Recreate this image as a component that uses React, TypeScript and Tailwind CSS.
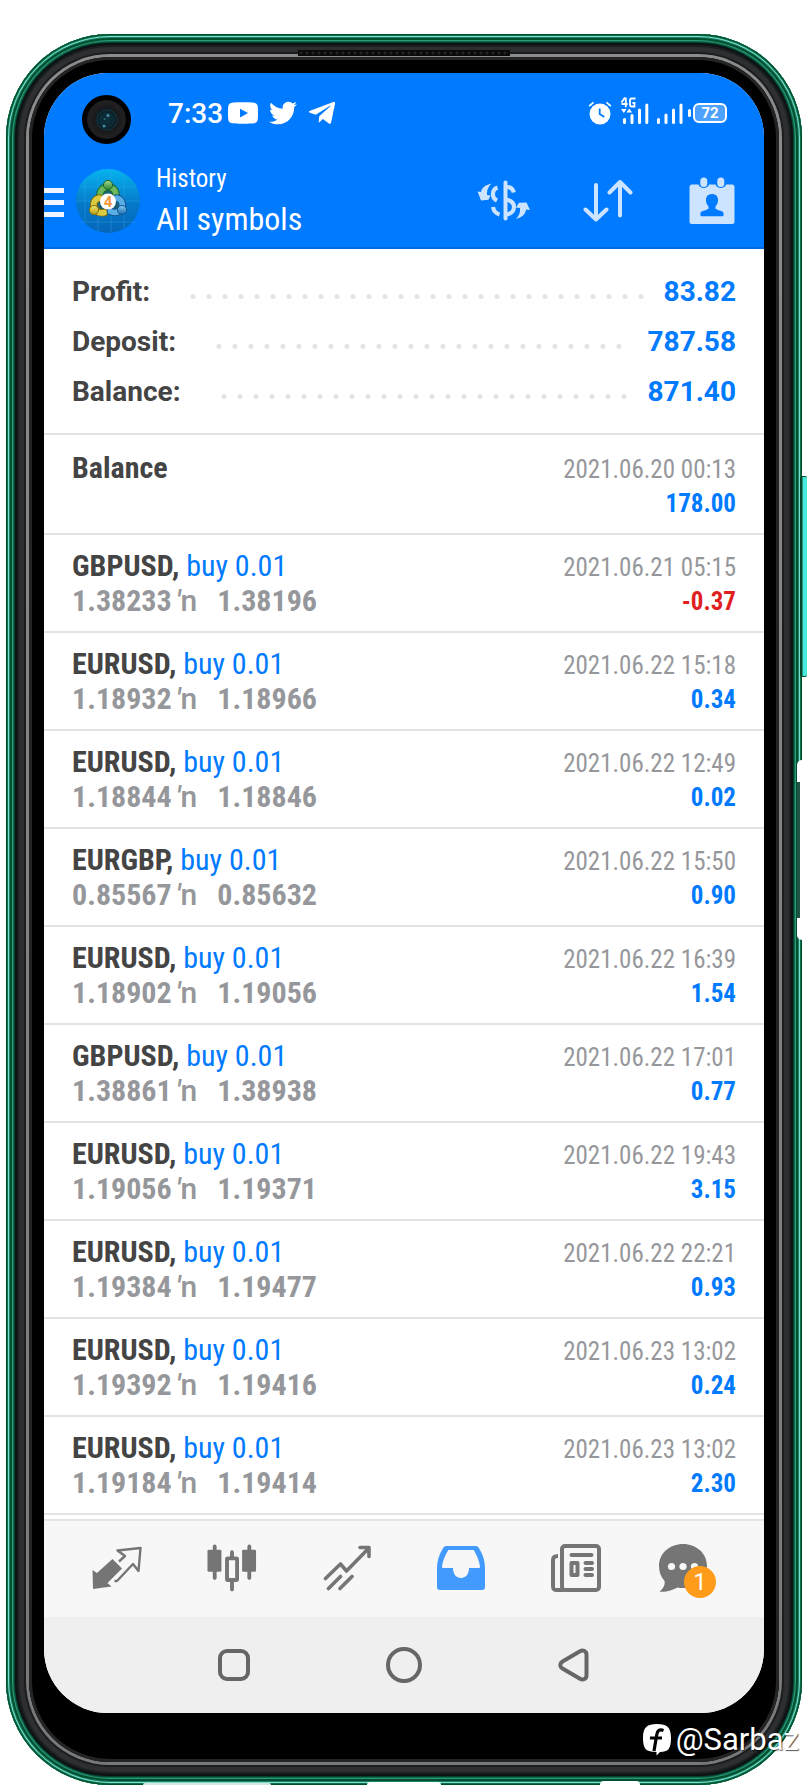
import type { ReactNode } from "react";
import { FaTelegramPlane, FaTwitter } from "react-icons/fa";

type Deal = {
  symbol: string;
  open: string;
  close: string;
  time: string;
  profit: string;
};

const condensed = "font-['Roboto_Condensed','Liberation_Sans_Narrow',Roboto,sans-serif]";

const summary = [
  { label: "Profit", value: "83.82", dots: "ml-10 mr-4" },
  { label: "Deposit", value: "787.58", dots: "ml-10 mr-5" },
  { label: "Balance", value: "871.40", dots: "ml-10 mr-4" },
];

const deals: Deal[] = [
  { symbol: "GBPUSD", open: "1.38233", close: "1.38196", time: "2021.06.21 05:15", profit: "-0.37" },
  { symbol: "EURUSD", open: "1.18932", close: "1.18966", time: "2021.06.22 15:18", profit: "0.34" },
  { symbol: "EURUSD", open: "1.18844", close: "1.18846", time: "2021.06.22 12:49", profit: "0.02" },
  { symbol: "EURGBP", open: "0.85567", close: "0.85632", time: "2021.06.22 15:50", profit: "0.90" },
  { symbol: "EURUSD", open: "1.18902", close: "1.19056", time: "2021.06.22 16:39", profit: "1.54" },
  { symbol: "GBPUSD", open: "1.38861", close: "1.38938", time: "2021.06.22 17:01", profit: "0.77" },
  { symbol: "EURUSD", open: "1.19056", close: "1.19371", time: "2021.06.22 19:43", profit: "3.15" },
  { symbol: "EURUSD", open: "1.19384", close: "1.19477", time: "2021.06.22 22:21", profit: "0.93" },
  { symbol: "EURUSD", open: "1.19392", close: "1.19416", time: "2021.06.23 13:02", profit: "0.24" },
  { symbol: "EURUSD", open: "1.19184", close: "1.19414", time: "2021.06.23 13:02", profit: "2.30" },
];

function YoutubeIcon() {
  return (
    <svg width="30" height="22" viewBox="0 0 30 22" aria-hidden="true">
      <path
        fill="#fff"
        fillRule="evenodd"
        d="M4 .8C8 .2 22 .2 26 .8c2.400.3 3.600 1.700 3.800 4 .3 4 .3 8.400 0 12.400-.2 2.300-1.400 3.700-3.800 4-4 .6-18 .6-22 0-2.400-.3-3.600-1.700-3.800-4-.3-4-.3-8.400 0-12.400C.4 2.500 1.600 1.100 4 .8ZM12 6.700v8.800l8-4.400Z"
      />
    </svg>
  );
}

function AlarmIcon() {
  return (
    <svg width="24" height="24" viewBox="0 0 24 24" fill="none" aria-hidden="true">
      <circle cx="12" cy="13" r="10.500" fill="#fff" />
      <path d="M1.200 5.200 5.500 1.400M22.800 5.200 18.500 1.400" stroke="#fff" strokeWidth="1.800" />
      <path d="M11.700 7.500v5.600l4.600 3" stroke="#007aff" strokeWidth="1.800" />
    </svg>
  );
}

function SignalIcon() {
  return (
    <svg width="64" height="28" viewBox="0 0 64 28" fill="#fff" role="img" aria-label="4G signal">
      <path d="M1.500 5.500 5 .5M1.500 7h6.200M5.800 .5v9.800M15.500 1.500h-4a1.500 1.500 0 0 0-1.500 1.500v5a1.500 1.500 0 0 0 1.500 1.500h3V6H12.500" fill="none" stroke="#fff" strokeWidth="1.800" />
      <path d="M1 12h5.500l-2.700 4ZM6.500 15.500 9.300 11.500l2.800 4Z" />
      <rect x="3" y="21" width="3" height="6" rx="1.500" />
      <rect x="10.500" y="17" width="3" height="10" rx="1.500" />
      <rect x="18" y="11.500" width="3" height="15.500" rx="1.500" />
      <rect x="25.300" y="6.500" width="3" height="20.500" rx="1.500" />
      <rect x="37" y="21" width="3" height="6" rx="1.500" />
      <rect x="44.500" y="16.500" width="3" height="10.500" rx="1.500" />
      <rect x="52" y="11.500" width="3" height="15.500" rx="1.500" />
      <rect x="59.500" y="6.500" width="3" height="20.500" rx="1.500" />
    </svg>
  );
}

function LogoIcon() {
  return (
    <svg width="64" height="64" viewBox="0 0 64 64" className="ml-3 shrink-0" aria-hidden="true">
      <defs>
        <linearGradient id="sky" x1="0" y1="0" x2="0" y2="1">
          <stop offset="0" stopColor="#06b4ef" />
          <stop offset=".55" stopColor="#0678c8" />
          <stop offset="1" stopColor="#0566b8" />
        </linearGradient>
        <linearGradient id="leaf" x1="0" y1="0" x2="0" y2="1">
          <stop offset="0" stopColor="#a8d888" />
          <stop offset="1" stopColor="#2b8a35" />
        </linearGradient>
        <linearGradient id="gold" x1="0" y1="0" x2="0" y2="1">
          <stop offset="0" stopColor="#f2e66a" />
          <stop offset="1" stopColor="#b89c14" />
        </linearGradient>
        <linearGradient id="sea" x1="0" y1="0" x2="0" y2="1">
          <stop offset="0" stopColor="#8fcdf4" />
          <stop offset="1" stopColor="#1467ad" />
        </linearGradient>
      </defs>
      <circle cx="32" cy="32" r="32" fill="url(#sky)" />
      <path d="M9 11v42M22 2v60M35 1v62M48 5v54M4 18h56M0 32h64M5 53h54" stroke="#3db0e8" strokeOpacity=".35" />
      <path d="M32 21 43 39H21Z" fill="none" stroke="#2a4a2a" strokeWidth="13.500" strokeLinejoin="round" strokeOpacity=".55" />
      <g fill="none" strokeLinecap="round">
        <path d="M24 28c-.5-6 2.500-10 8-10s8.500 4 8 10" stroke="#17682a" strokeWidth="7.500" />
        <path d="M24 28c-.5-6 2.500-10 8-10s8.500 4 8 10" stroke="#6db75f" strokeWidth="5.500" />
        <path d="M23.500 29c-5 1-7 5.500-5 10s6 5.500 10 4.500" stroke="#80700e" strokeWidth="7.500" />
        <path d="M23.500 29c-5 1-7 5.500-5 10s6 5.500 10 4.500" stroke="#dcca42" strokeWidth="5.500" />
        <path d="M40.500 29c5 1 7 5.500 5 10s-6 5.500-11 3.500" stroke="#125796" strokeWidth="7.500" />
        <path d="M40.500 29c5 1 7 5.500 5 10s-6 5.500-11 3.500" stroke="#59aee6" strokeWidth="5.500" />
      </g>
      <circle cx="32" cy="16" r="4.600" fill="url(#leaf)" stroke="#17682a" />
      <circle cx="18" cy="41" r="4.600" fill="url(#gold)" stroke="#80700e" />
      <circle cx="46" cy="41" r="4.600" fill="url(#sea)" stroke="#125796" />
      <circle cx="32" cy="32.500" r="8" fill="#fff" />
      <text x="32" y="38" textAnchor="middle" fontFamily="Roboto, sans-serif" fontSize="15" fontWeight="700" fill="#f39a3d">
        4
      </text>
    </svg>
  );
}

function CurrencyIcon() {
  return (
    <svg width="54" height="42" viewBox="0 0 54 42" fill="none" stroke="#cce4ff" aria-hidden="true">
      <path d="M28.500 2.500v36" strokeWidth="4" strokeLinecap="round" />
      <path d="M20.500 7.500c-5.500 2-6.500 10-.5 13" strokeWidth="4.200" />
      <path d="M30 7c4 0 6 2 6.800 5.500M16 27c.8 4.500 3 6.500 6.500 7.500M29 19.500c5 1 8 3.500 8 7.500s-3 7-8 7.500" strokeWidth="4.200" />
      <path d="M14.500 3.500C8 5 4.500 8 4 12L.5 11.500 4 20.500l7.500-.8 2-4.200-3.500-.5c-.5-4 1-8.500 4.500-11.500Z" fill="#cce4ff" stroke="none" />
      <path d="M39 39c6-1.500 9.500-5 10-9.500l4 .5-3.500-7.500-7.500.3-3 4.700 4 .5c.5 4-1 8-4 11Z" fill="#cce4ff" stroke="none" />
    </svg>
  );
}

function SortIcon() {
  return (
    <svg width="50" height="44" viewBox="0 0 50 44" fill="none" stroke="#cce4ff" strokeWidth="4" strokeLinecap="round" strokeLinejoin="round" aria-hidden="true">
      <path d="M13 6v34M2.500 30.500 13 40.500l10.500-10M37 36.500V3M26.500 13.500 37 3l10.500 10.500" />
    </svg>
  );
}

function CalendarIcon() {
  return (
    <svg width="46" height="48" viewBox="0 0 46 48" fill="#cce4ff" aria-hidden="true">
      <rect x=".5" y="7.500" width="45" height="39.500" rx="2.500" />
      <rect x="9.300" y="-1" width="11" height="12" rx="5" fill="#007aff" />
      <rect x="26.300" y="-1" width="11" height="12" rx="5" fill="#007aff" />
      <rect x="11.300" y=".5" width="7" height="9.500" rx="3.500" />
      <rect x="28.300" y=".5" width="7" height="9.500" rx="3.500" />
      <path fill="#007aff" d="M23 17c4 0 6.300 2.800 6 6.500-.2 2.700-1.300 4.700-2.500 5.700v2.600c2 1.700 7.500 2 8 4.200.3 1.300 0 2.700-.5 3.200H12c-.5-.5-.8-1.900-.5-3.200.5-2.200 6-2.500 8-4.200v-2.600c-1.200-1-2.300-3-2.500-5.700-.3-3.700 2-6.500 6-6.500Z" />
    </svg>
  );
}

function QuotesIcon() {
  return (
    <svg width="50" height="44" viewBox="0 0 50 44" aria-hidden="true">
      <path fill="#757575" d="M20.500 13 30 22.500 15.500 37l4 3.500L1 43 .5 24l4.500 3Z" />
      <path fill="none" stroke="#757575" strokeWidth="2.400" strokeLinejoin="round" d="m27 15.500 6-5.500-7.500-5.500L48.500 2 46.500 25l-5.500-7L25 35h-2.500" />
    </svg>
  );
}

function CandlesIcon() {
  return (
    <svg width="52" height="50" viewBox="0 0 52 50" fill="#757575" aria-hidden="true">
      <path d="M6 2q2-3 4 0v34q-2 3-4 0ZM42 2q2-3 4 0v34q-2 3-4 0ZM24 8q2-3 4 0v6h-4ZM24 38h4v10q-2 3-4 0Z" />
      <rect x=".5" y="6" width="14.500" height="23" rx="1.500" />
      <rect x="36.500" y="6" width="14.500" height="23" rx="1.500" />
      <rect x="20.800" y="15" width="10.500" height="22.500" rx="1" fill="none" stroke="#757575" strokeWidth="4" />
    </svg>
  );
}

function TradeIcon() {
  return (
    <svg width="48" height="46" viewBox="0 0 48 46" fill="none" stroke="#757575" strokeWidth="3.600" strokeLinecap="round" strokeLinejoin="round" aria-hidden="true">
      <path d="m2.500 33.500 15-14.500 6 7L45 4M37 2.500h9v9M5.500 43.500 17.500 31.500M17 43.500 29 31.500" />
    </svg>
  );
}

function HistoryIcon() {
  return (
    <svg width="50" height="46" viewBox="0 0 50 46" aria-hidden="true">
      <path
        fill="#429aff"
        fillRule="evenodd"
        d="M10.500 1h29c1.800 0 2.800.8 3.700 2.500C47 10 49 16 49 23v19c0 2-1 3-3 3H4c-2 0-3-1-3-3V23c0-7 2-13 5.800-19.500C7.700 1.800 8.700 1 10.500 1Zm1.800 4C9 10.500 6.600 16 6 21.500c0 1 .4 1.500 1.500 1.500H17c0 6.500 3.500 10 8 10s8-3.500 8-10h9.500c1.100 0 1.500-.5 1.500-1.500C43.400 16 41 10.500 37.700 5Z"
      />
    </svg>
  );
}

function NewsIcon() {
  return (
    <svg width="50" height="48" viewBox="0 0 50 48" fill="none" stroke="#757575" aria-hidden="true">
      <rect x="11" y="2" width="37" height="44" rx="3" strokeWidth="4" />
      <path d="M7 12c-3 0-5 1-5 4v26c0 3 1 4 4 4h7" strokeWidth="4" />
      <path d="M20.500 11h20M34.500 19h6.500M34.500 25h6.500M34.500 31h6.500" strokeWidth="4" strokeLinecap="round" />
      <rect x="20.500" y="19" width="6" height="12" strokeWidth="4" strokeLinejoin="round" />
    </svg>
  );
}

function ChatIcon() {
  return (
    <svg width="50" height="48" viewBox="0 0 50 48" aria-hidden="true">
      <path fill="#757575" d="M25 0c13.500 0 24 9.500 24 22S39 44 25 44c-2 0-4-.2-5.500-.6C15 46 7 48.500 1.500 47.500 5 45 7.500 41 6.500 37 3 33 1 28 1 22 1 9.500 11.500 0 25 0Z" />
      <circle cx="13.500" cy="22.500" r="3.600" fill="#f7f7f7" />
      <circle cx="25" cy="22.500" r="3.600" fill="#f7f7f7" />
      <circle cx="36.500" cy="22.500" r="3.600" fill="#f7f7f7" />
    </svg>
  );
}

function TabButton({ label, children }: { label: string; children: ReactNode }) {
  return (
    <button type="button" aria-label={label} className="flex h-12 w-[50px] items-center justify-center">
      {children}
    </button>
  );
}

function StatusBar() {
  return (
    <div className="relative flex h-[84px] items-center pr-[37px] pb-1 pl-[124px] text-white">
      <div className="absolute top-[22px] left-[38px] flex size-[49px] items-center justify-center rounded-full border-[5px] border-black bg-[radial-gradient(circle,#0d3440_0,#0a222b_26%,#1a1a1c_46%,#202022_60%,#161616_100%)]">
        <svg width="22" height="22" viewBox="0 0 22 22" fill="none" aria-hidden="true">
          <circle cx="11" cy="11" r="10" stroke="#123844" />
          <circle cx="11" cy="11" r="6.500" stroke="#0f3a4a" />
          <circle cx="12" cy="6.500" r="1.500" fill="#4f8ca0" />
          <circle cx="8" cy="17" r="1.500" fill="#3f91a4" />
          <circle cx="8.500" cy="10" r="1" fill="#2b6678" />
        </svg>
      </div>
      <time className="pt-0.5 text-[28px] leading-8 font-medium">7:33</time>
      <div className="ml-[5px] flex items-center">
        <YoutubeIcon />
        <FaTwitter size={28} className="ml-[11px]" aria-hidden="true" />
        <FaTelegramPlane size={30} className="ml-2.5" aria-hidden="true" />
      </div>
      <div className="ml-auto flex items-center">
        <AlarmIcon />
        <span className="mb-1 ml-2">
          <SignalIcon />
        </span>
        <span className="ml-1 h-2 w-[3px] rounded-full bg-white" />
        <span className="ml-0.5 flex h-5 w-[34px] items-center justify-center rounded-[6px] border-2 border-white bg-[#4da2ff] text-[15px] leading-4 font-bold">
          72
        </span>
      </div>
    </div>
  );
}

function AppHeader() {
  return (
    <header className="flex h-[92px] items-start border-b-2 border-[#006ae0] pr-[29px]">
      <button type="button" aria-label="Menu" className="mt-[31px] flex w-5 flex-col gap-[7px]">
        <span className="h-[5px] bg-[#f0f6ff]" />
        <span className="h-[5px] bg-[#f0f6ff]" />
        <span className="h-[5px] bg-[#f0f6ff]" />
      </button>
      <div className="mt-3">
        <LogoIcon />
      </div>
      <div className={`mt-[6px] ml-4 text-white ${condensed}`}>
        <h1 className="text-[25px] leading-8">History</h1>
        <p className="mt-1 text-[32px] leading-10">All symbols</p>
      </div>
      <div className="mt-5 ml-auto flex items-center">
        <button type="button" aria-label="Currency">
          <CurrencyIcon />
        </button>
        <button type="button" aria-label="Sort" className="ml-[52px]">
          <SortIcon />
        </button>
        <button type="button" aria-label="Period" className="ml-14">
          <CalendarIcon />
        </button>
      </div>
    </header>
  );
}

function DealRow({ deal }: { deal: Deal }) {
  return (
    <li className="flex h-[98px] justify-between border-b-2 border-[#e4e4e4] px-7 pt-[13px]">
      <span className="flex flex-col text-[30px] leading-[35px]">
        <span>
          <b className="text-[#444]">{deal.symbol},</b> <span className="text-[#007aff]">buy 0.01</span>
        </span>
        <span className="flex font-bold text-[#96979b]">
          <span>{deal.open}</span>
          <span className="ml-1 font-['Roboto'] font-medium">
            <i>′</i>n
          </span>
          <span className="ml-5">{deal.close}</span>
        </span>
      </span>
      <span className="flex flex-col pt-[3px] text-right text-[25px] leading-[34px]">
        <time className="text-[#96979b]">{deal.time}</time>
        <span className={deal.profit.startsWith("-") ? "font-bold text-[#e02020]" : "font-bold text-[#007aff]"}>
          {deal.profit}
        </span>
      </span>
    </li>
  );
}

function Phone() {
  return (
    <div className="relative rounded-[104px] bg-[#00422a] p-[9px] shadow-[inset_0_0_0_1px_#004d2a,inset_0_0_0_2px_#0b6f4c,inset_0_0_0_3px_#7fded0,inset_0_0_0_4px_#1d8064,inset_0_0_0_6px_#00502f,inset_0_0_0_7px_#2f977c,inset_0_0_0_8px_#0f6b4c]">
      <div className="rounded-[95px] bg-[#1b1d1e] p-[11px] shadow-[inset_0_0_0_2px_#0a1416,inset_0_0_0_4px_#1c1e1f,inset_0_0_0_9px_#2e2f30]">
        <div className="rounded-[84px] bg-[linear-gradient(#8a8c8d,#77797b)] p-[3px]">
          <div className="rounded-[81px] bg-black px-[15px] pt-4 pb-[49px] shadow-[inset_0_0_0_3px_#242424]">
            <main className="overflow-hidden rounded-[64px] bg-white">
              <div className="bg-[#007aff]">
                <StatusBar />
                <AppHeader />
              </div>

              <dl className="border-b-2 border-[#e4e4e4] px-7 pt-[18px] pb-4 text-[28px] leading-[50px] font-bold">
                {summary.map((line) => (
                  <div key={line.label} className="flex items-center">
                    <dt className="text-[#444]">{line.label}:</dt>
                    <dd className="flex flex-1 items-center text-[#007aff]">
                      <span
                        className={`mt-2 h-[5px] flex-1 bg-[radial-gradient(circle_at_3px_50%,#e4e4e4_2px,transparent_3px)] bg-[length:16px_5px] ${line.dots}`}
                      />
                      {line.value}
                    </dd>
                  </div>
                ))}
              </dl>

              <ul className={`h-[1084px] overflow-hidden ${condensed}`}>
                <li className="flex h-[100px] justify-between border-b-2 border-[#e4e4e4] px-7 pt-[15px]">
                  <span className="text-[30px] leading-[35px] font-bold text-[#444]">Balance</span>
                  <span className="flex flex-col pt-[3px] text-right text-[25px] leading-[34px]">
                    <time className="text-[#96979b]">2021.06.20 00:13</time>
                    <span className="font-bold text-[#007aff]">178.00</span>
                  </span>
                </li>
                {deals.map((deal) => (
                  <DealRow key={deal.time + deal.open} deal={deal} />
                ))}
              </ul>

              <nav aria-label="Sections" className="flex h-[98px] items-center justify-between border-t-2 border-[#e4e4e4] bg-[#f7f7f7] px-12 pb-[3px]">
                <TabButton label="Quotes">
                  <QuotesIcon />
                </TabButton>
                <TabButton label="Chart">
                  <CandlesIcon />
                </TabButton>
                <TabButton label="Trade">
                  <TradeIcon />
                </TabButton>
                <TabButton label="History">
                  <HistoryIcon />
                </TabButton>
                <TabButton label="News">
                  <NewsIcon />
                </TabButton>
                <button type="button" aria-label="Messages" className="relative -ml-2 flex h-12 w-[58px] items-center">
                  <ChatIcon />
                  <span className="absolute top-[22px] left-[26px] flex size-8 items-center justify-center rounded-full bg-[#ff9d1a] text-2xl text-white">
                    1
                  </span>
                </button>
              </nav>

              <nav aria-label="System" className="flex h-24 items-center justify-between bg-[#efefef] pr-[174px] pl-[174px]">
                <button type="button" aria-label="Recent apps" className="size-8 rounded-[9px] border-4 border-[#666]" />
                <button type="button" aria-label="Home" className="size-9 rounded-full border-4 border-[#666]" />
                <button type="button" aria-label="Back">
                  <svg width="32" height="36" viewBox="0 0 32 36" fill="none" stroke="#666" strokeWidth="4" aria-hidden="true">
                    <path d="M4.500 14.500 22 4.200c3-1.600 6.500-.2 6.500 3.300v21c0 3.500-3.500 4.900-6.500 3.300L4.500 21.500c-3-2-3-5 0-7Z" />
                  </svg>
                </button>
              </nav>
            </main>
          </div>
        </div>
      </div>

      <div className="absolute top-4 left-1/2 h-[6px] w-[212px] -translate-x-1/2 bg-[#0a0a0a] bg-[radial-gradient(circle,#222_1px,transparent_2px)] bg-[length:6px_6px]" />
      <div className="absolute top-[442px] -right-[5px] h-[201px] w-[7px] rounded-[2px] border-y border-[#00502f] bg-[linear-gradient(90deg,#00452c_0,#00452c_2px,#48eadb_3px)]" />
      <div className="absolute top-[726px] right-0 h-[180px] w-[5px] rounded-l-full bg-white" />
      <div className="absolute top-[748px] right-[2px] h-[136px] w-[3px] bg-[#1f5348]" />
      <div className="absolute bottom-0 left-[137px] h-0.5 w-32 rounded-t-full bg-[#d5e8e0]" />
      <div className="absolute bottom-0 left-[361px] h-[3px] w-[74px] rounded-t-full bg-white" />
      <div className="absolute bottom-0 left-[594px] h-1 w-10 rounded-t-full bg-white" />
    </div>
  );
}

export default function App() {
  return (
    <div className="relative min-h-screen overflow-hidden bg-white px-1.5 pt-[34px] font-['Roboto',sans-serif]">
      <Phone />
      <div className="absolute top-[1724px] right-[9px] flex items-center gap-1 text-white">
        <svg width="29" height="32" viewBox="0 0 29 32" aria-hidden="true">
          <path fill="#fff" d="M14 0c10 0 14 3 14 14s-3 14-11 14l-3.500 3.500V28C3 28 0 25 0 14S4 0 14 0Z" />
          <path d="M20.500 6.500c-4-1.500-6 0-6.700 4L11 27M7 14h12" fill="none" stroke="#000" strokeWidth="3.200" />
        </svg>
        <span className="text-[31px] leading-8 whitespace-nowrap [text-shadow:1px_1px_1px_#000a]">@Sarbaz</span>
      </div>
    </div>
  );
}
